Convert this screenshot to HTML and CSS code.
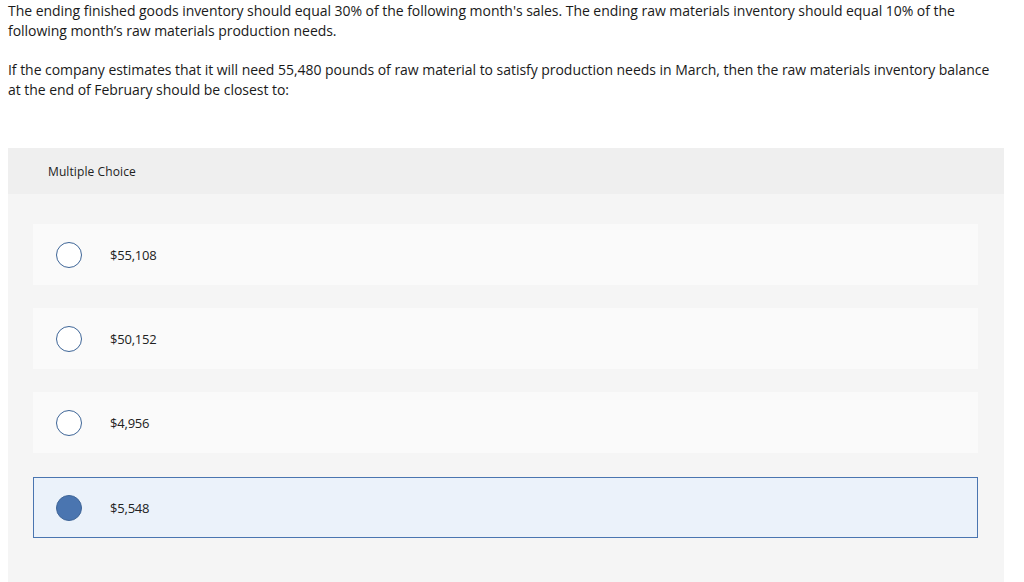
FILE: index.html
```html
<!DOCTYPE html>
<html>
<head>
<meta charset="utf-8">
<link rel="stylesheet" href="styles.css">
</head>
<body>
<div class="page">
  <div class="question">
    <p>The ending finished goods inventory should equal 30% of the following month's sales. The ending raw materials inventory should equal 10% of the following month’s raw materials production needs.</p>
    <p>If the company estimates that it will need 55,480 pounds of raw material to satisfy production needs in March, then the raw materials inventory balance at the end of February should be closest to:</p>
  </div>
  <div class="mc">
    <div class="mc-head">Multiple Choice</div>
    <div class="mc-body">
      <div class="option"><span class="radio"></span><span class="label">$55,108</span></div>
      <div class="option"><span class="radio"></span><span class="label">$50,152</span></div>
      <div class="option"><span class="radio"></span><span class="label">$4,956</span></div>
      <div class="option selected"><span class="radio"></span><span class="label">$5,548</span></div>
    </div>
  </div>
</div>
</body>
</html>
```
FILE: styles.css
```css
html, body {
  margin: 0;
  padding: 0;
  background: #ffffff;
}
body {
  font-family: "Open Sans", "Liberation Sans", sans-serif;
  color: #1a1a1a;
}
.page {
  padding: 1px 20px 0 8px;
}
.question p {
  margin: 0 0 19px 0;
  font-size: 14px;
  line-height: 20px;
  letter-spacing: -0.04px;
}
.question {
  margin-bottom: 48px;
}
.mc {
  background: #f5f5f5;
}
.mc-head {
  background: #efefef;
  height: 46px;
  display: flex;
  align-items: center;
  padding-left: 40px;
  font-size: 12px;
  color: #222;
  letter-spacing: 0.1px;
}
.mc-body {
  display: flex;
  flex-direction: column;
  gap: 23px;
  padding: 30px 26px 44px 25px;
}
.option {
  height: 61px;
  background: #fafafa;
  border: 1px solid transparent;
  box-sizing: border-box;
  display: flex;
  align-items: center;
  padding-left: 22px;
  font-size: 13px;
  color: #222;
}
.label {
  letter-spacing: -0.2px;
  margin-left: 1px;
}
.option.selected {
  margin-top: 1px;
  background: #ebf2fa;
  border-color: #4a75b0;
}
.radio {
  width: 24px;
  height: 24px;
  border: 1px solid #3e6597;
  border-radius: 50%;
  background: #fff;
  margin-right: 27px;
  flex: none;
}
.selected .radio {
  background: #4a75b0;
  border-color: #3e6597;
}
```
